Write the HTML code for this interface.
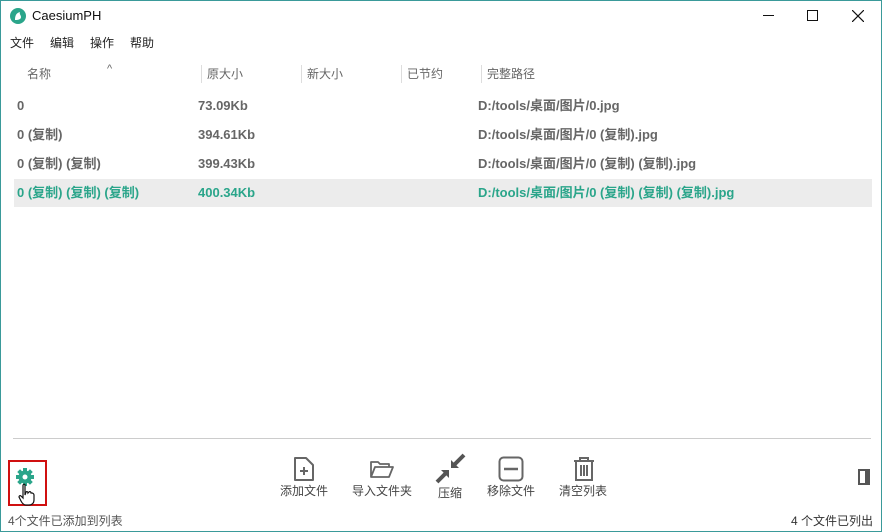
<!DOCTYPE html>
<html><head><meta charset="utf-8"><style>
*{margin:0;padding:0;box-sizing:border-box}
body{width:882px;height:532px;background:#fff;position:relative;overflow:hidden;font-family:"Liberation Sans","Noto Sans CJK SC",sans-serif;color:#222;border:1px solid #3a9a9a;}
.a{position:absolute;white-space:nowrap;line-height:16px}
.hd{font-size:12px;color:#666;top:65px}
.sep{position:absolute;top:64px;width:1px;height:18px;background:#ddd}
.r{font-size:13px;font-weight:bold;color:#666}
.g{color:#2aa58a}
.tb{font-size:12px;color:#444;text-align:center}
.m{font-size:12px;color:#222;top:34px}
</style></head><body>
<svg class="a" style="left:9px;top:7px" width="16" height="16" viewBox="0 0 16 16"><circle cx="8" cy="8" r="8" fill="#2aa58a"/><path d="M5 12 C5 8 6 5 10 4 C9 6 11 7 11 9 C11 11 9 12 5 12Z" fill="#fff"/></svg>
<div class="a" style="left:31px;top:7px;font-size:13px;color:#111">CaesiumPH</div>
<div class="a" style="left:762px;top:14px;width:11px;height:1px;background:#111"></div>
<div class="a" style="left:806px;top:9px;width:11px;height:11px;border:1px solid #111"></div>
<svg class="a" style="left:851px;top:9px" width="12" height="12"><path d="M0 0L12 12M12 0L0 12" stroke="#111" stroke-width="1.2"/></svg>
<div class="a m" style="left:9px">文件</div><div class="a m" style="left:49px">编辑</div><div class="a m" style="left:89px">操作</div><div class="a m" style="left:129px">帮助</div>
<div class="a hd" style="left:26px">名称</div>
<div class="a" style="left:106px;top:60px;font-size:11px;color:#666">^</div>
<div class="sep" style="left:200px"></div><div class="sep" style="left:300px"></div><div class="sep" style="left:400px"></div><div class="sep" style="left:480px"></div>
<div class="a hd" style="left:206px">原大小</div>
<div class="a hd" style="left:306px">新大小</div>
<div class="a hd" style="left:406px">已节约</div>
<div class="a hd" style="left:486px">完整路径</div>
<div class="a r" style="left:16px;top:97px">0</div><div class="a r" style="left:197px;top:97px">73.09Kb</div><div class="a r" style="left:477px;top:97px">D:/tools/桌面/图片/0.jpg</div>
<div class="a r" style="left:16px;top:126px">0 (复制)</div><div class="a r" style="left:197px;top:126px">394.61Kb</div><div class="a r" style="left:477px;top:126px">D:/tools/桌面/图片/0 (复制).jpg</div>
<div class="a r" style="left:16px;top:155px">0 (复制) (复制)</div><div class="a r" style="left:197px;top:155px">399.43Kb</div><div class="a r" style="left:477px;top:155px">D:/tools/桌面/图片/0 (复制) (复制).jpg</div>
<div class="a" style="left:13px;top:178px;width:858px;height:28px;background:#ececec"></div>
<div class="a r g" style="left:16px;top:184px">0 (复制) (复制) (复制)</div><div class="a r g" style="left:197px;top:184px">400.34Kb</div><div class="a r g" style="left:477px;top:184px">D:/tools/桌面/图片/0 (复制) (复制) (复制).jpg</div>
<div class="a" style="left:12px;top:437px;width:858px;height:1px;background:#ccc"></div>
<svg class="a" style="left:292px;top:455px" width="22" height="26" viewBox="0 0 22 26"><path d="M2 2H13L20 9V24H2Z" fill="none" stroke="#666" stroke-width="2" stroke-linejoin="round"/><path d="M11 11V19M7 15H15" stroke="#666" stroke-width="2"/></svg>
<div class="a tb" style="left:276px;top:482px;width:54px">添加文件</div>
<svg class="a" style="left:368px;top:458px" width="26" height="20" viewBox="0 0 26 20"><path d="M2 18V3H9L11 5H20V8M2 18L6 8H24L20 18Z" fill="none" stroke="#666" stroke-width="1.8" stroke-linejoin="round"/></svg>
<div class="a tb" style="left:348px;top:482px;width:66px">导入文件夹</div>
<svg class="a" style="left:433px;top:452px" width="32" height="32" viewBox="0 0 32 32"><path d="M30 2L19 13M3 29L13 19" stroke="#555" stroke-width="4"/><path d="M17 7V15H25Z M7 17H15V25Z" fill="#555"/></svg>
<div class="a tb" style="left:434px;top:484px;width:30px">压缩</div>
<svg class="a" style="left:497px;top:455px" width="26" height="26"><rect x="1.5" y="1.5" width="23" height="23" rx="4" fill="none" stroke="#666" stroke-width="2"/><path d="M6 13H20" stroke="#666" stroke-width="2.5"/></svg>
<div class="a tb" style="left:483px;top:482px;width:54px">移除文件</div>
<svg class="a" style="left:571px;top:455px" width="24" height="26" viewBox="0 0 24 26"><path d="M2 5H22M8 5V2H16V5M4 5V24H20V5M9 9V20M12 9V20M15 9V20" fill="none" stroke="#666" stroke-width="2"/></svg>
<div class="a tb" style="left:555px;top:482px;width:54px">清空列表</div>
<div class="a" style="left:7px;top:459px;width:39px;height:46px;border:2px solid #d01010"></div>
<svg class="a" style="left:14px;top:466px" width="20" height="20" viewBox="0 0 20 20"><g fill="#2aa58a"><circle cx="10" cy="10" r="6.5"/><rect x="8" y="1" width="4" height="18"/><rect x="1" y="8" width="18" height="4"/><rect x="8" y="1" width="4" height="18" transform="rotate(45 10 10)"/><rect x="8" y="1" width="4" height="18" transform="rotate(-45 10 10)"/></g><circle cx="10" cy="10" r="2.5" fill="#fff"/></svg>
<svg class="a" style="left:17px;top:482px" width="20" height="24" viewBox="0 0 20 24"><path d="M5 2C6 1 7 1 7 2V12L8 9C9 8 10 9 10 10L11 9C12 8 13 9 13 10L14 10C15 10 16 11 16 12V17C16 20 14 22 11 22H8C6 22 4 20 3 18L1 14C1 13 2 12 3 13L5 15Z" fill="#fff" stroke="#111" stroke-width="1.2"/></svg>
<div class="a" style="left:7px;top:512px;font-size:12px;color:#555">4个文件已添加到列表</div>
<div class="a" style="left:857px;top:468px;width:12px;height:16px;border:2px solid #555;border-right-width:5px"></div>
<div class="a" style="left:790px;top:512px;font-size:12px;color:#333">4 个文件已列出</div>
</body></html>
